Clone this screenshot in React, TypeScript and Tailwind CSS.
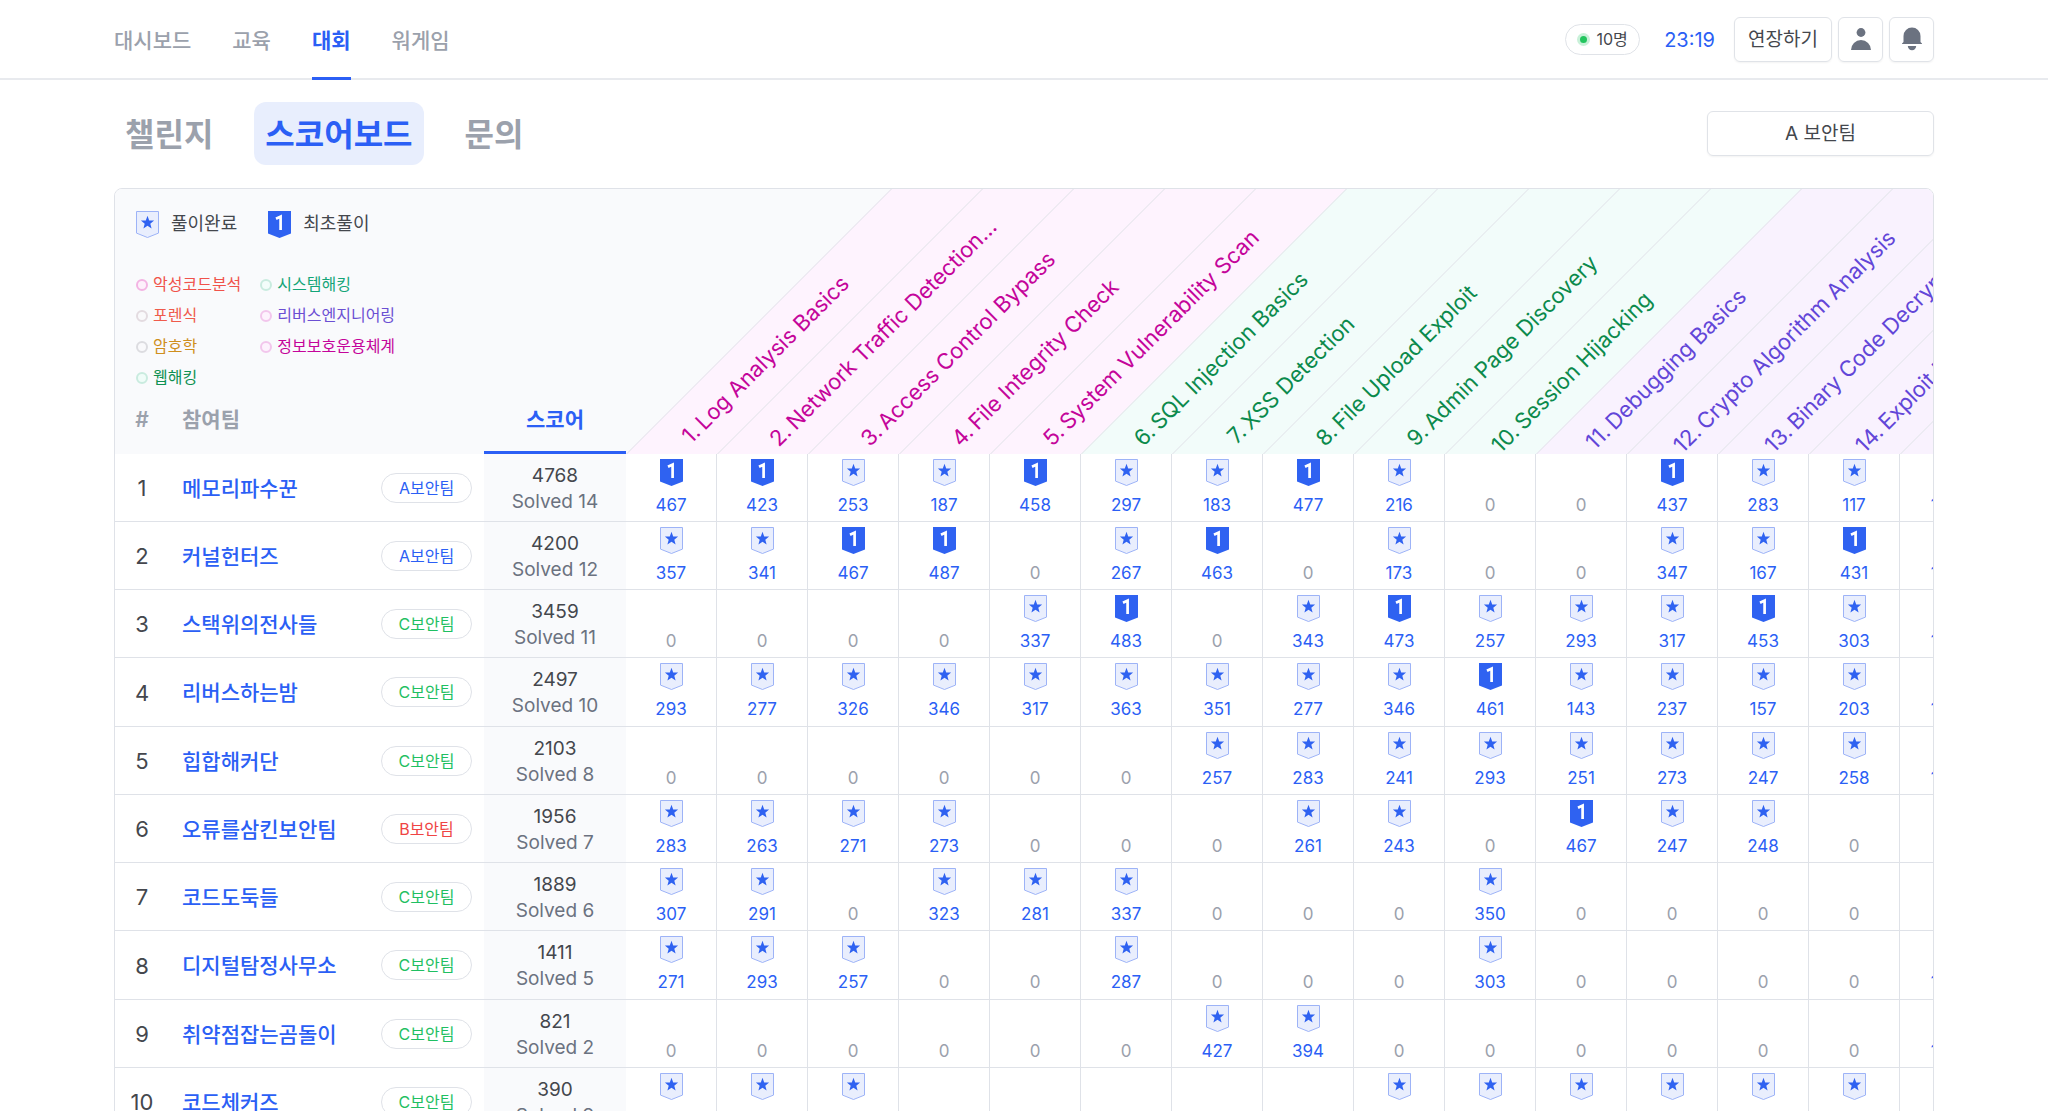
import clsx from "clsx";

type Category = "system" | "web" | "reversing";

const navItems = [
  { label: "대시보드", active: false },
  { label: "교육", active: false },
  { label: "대회", active: true },
  { label: "워게임", active: false },
];

const tabs = [
  { label: "챌린지", active: false },
  { label: "스코어보드", active: true },
  { label: "문의", active: false },
];

const legend = [
  { label: "악성코드분석", text: "text-[#f0524a]", ring: "border-[#f3b3e3] bg-[#fdf0fb]" },
  { label: "포렌식", text: "text-[#ef5b4c]", ring: "border-[#e3dbe0] bg-[#f9f9fb]" },
  { label: "암호학", text: "text-[#cf8f1d]", ring: "border-[#dcdce0] bg-[#f9f9fb]" },
  { label: "웹해킹", text: "text-[#0f9152]", ring: "border-[#c9ebdf] bg-[#effcf8]" },
  { label: "시스템해킹", text: "text-[#14a578]", ring: "border-[#c9ebdf] bg-[#f3fdfa]" },
  { label: "리버스엔지니어링", text: "text-[#6b4fd3]", ring: "border-[#f2c6ec] bg-[#fdf2fd]" },
  { label: "정보보호운용체계", text: "text-[#c4049a]", ring: "border-[#f2c6ec] bg-[#fdf2fd]" },
];

const challenges: { title: string; category: Category }[] = [
  { title: "Log Analysis Basics", category: "system" },
  { title: "Network Traffic Detection Rules", category: "system" },
  { title: "Access Control Bypass", category: "system" },
  { title: "File Integrity Check", category: "system" },
  { title: "System Vulnerability Scan", category: "system" },
  { title: "SQL Injection Basics", category: "web" },
  { title: "XSS Detection", category: "web" },
  { title: "File Upload Exploit", category: "web" },
  { title: "Admin Page Discovery", category: "web" },
  { title: "Session Hijacking", category: "web" },
  { title: "Debugging Basics", category: "reversing" },
  { title: "Crypto Algorithm Analysis", category: "reversing" },
  { title: "Binary Code Decryption", category: "reversing" },
  { title: "Exploit Development", category: "reversing" },
  { title: "Malware Unpacking", category: "reversing" },
];

const categoryBg: Record<Category, string> = {
  system: "bg-[#fef3fe]",
  web: "bg-[#f2fcfa]",
  reversing: "bg-[#f9f2fe]",
};

const categoryText: Record<Category, string> = {
  system: "text-[#c4049a]",
  web: "text-[#0b8a4c]",
  reversing: "text-[#6246d8]",
};

const orgText: Record<string, string> = {
  A: "text-[#2b5ff5]",
  B: "text-[#ef4444]",
  C: "text-[#1fbf62]",
};

// "*" marks a first blood
const teams = [
  { name: "메모리파수꾼", org: "A", score: 4768, solved: 14, cells: "467* 423* 253 187 458* 297 183 477* 216 0 0 437* 283 117 164" },
  { name: "커널헌터즈", org: "A", score: 4200, solved: 12, cells: "357 341 467* 487* 0 267 463* 0 173 0 0 347 167 431* 148" },
  { name: "스택위의전사들", org: "C", score: 3459, solved: 11, cells: "0 0 0 0 337 483* 0 343 473* 257 293 317 453* 303 164" },
  { name: "리버스하는밤", org: "C", score: 2497, solved: 10, cells: "293 277 326 346 317 363 351 277 346 461* 143 237 157 203 148" },
  { name: "힙합해커단", org: "C", score: 2103, solved: 8, cells: "0 0 0 0 0 0 257 283 241 293 251 273 247 258 146" },
  { name: "오류를삼킨보안팀", org: "B", score: 1956, solved: 7, cells: "283 263 271 273 0 0 0 261 243 0 467* 247 248 0 0" },
  { name: "코드도둑들", org: "C", score: 1889, solved: 6, cells: "307 291 0 323 281 337 0 0 0 350 0 0 0 0 0" },
  { name: "디지털탐정사무소", org: "C", score: 1411, solved: 5, cells: "271 293 257 0 0 287 0 0 0 303 0 0 0 0 164" },
  { name: "취약점잡는곰돌이", org: "C", score: 821, solved: 2, cells: "0 0 0 0 0 0 427 394 0 0 0 0 0 0 148" },
  { name: "코드체커즈", org: "C", score: 390, solved: 9, cells: "31 47 52 0 0 0 0 0 43 38 41 36 52 50 0" },
];

function SolvedBadge() {
  return (
    <svg width="23" height="27" viewBox="0 0 23 27" aria-hidden="true">
      <path d="M.5.5h22v21.600l-11 4.400-11-4.400z" fill="#e9eefd" stroke="#9db3f7" />
      <path
        d="M11.500 4.800l1.700 4.600 4.900.2-3.800 3.100 1.300 4.800-4.100-2.700-4.100 2.700 1.300-4.800-3.800-3.100 4.900-.2z"
        fill="#2f62f1"
      />
    </svg>
  );
}

function FirstBadge() {
  return (
    <svg width="23" height="27" viewBox="0 0 23 27" aria-hidden="true">
      <path d="M0 0h23v22.400L11.500 27 0 22.400z" fill="#2f62f1" />
      <path d="M8 7.800l4.600-2.200v13.400" fill="none" stroke="#fff" strokeWidth="2.700" />
    </svg>
  );
}

function TopNav() {
  return (
    <header className="border-b-2 border-[#e8eaee]">
      <div className="mx-auto flex h-[78px] w-full max-w-[1820px] items-center justify-between">
        <nav className="flex h-full gap-[41px]">
          {navItems.map((item) => (
            <a
              key={item.label}
              href="#"
              className={clsx(
                "-mb-[2px] flex h-[80px] items-center border-b-3 pt-1 text-[21px]",
                item.active
                  ? "border-[#2b5ff5] font-semibold text-[#2b5ff5]"
                  : "border-transparent font-medium text-[#9ba1ac]",
              )}
            >
              {item.label}
            </a>
          ))}
        </nav>
        <div className="flex items-center gap-1.5 text-[#44474d]">
          <div className="flex h-[31px] w-[75px] items-center justify-center gap-1.5 rounded-full border border-[#e0e3e8] text-base">
            <span className="size-[13px] rounded-full border-3 border-[#c9f1d9] bg-[#22c55e]" />
            10명
          </div>
          <span className="pt-0.5 pr-[13px] pl-[18px] text-[20px] text-[#2b5ff5]">23:19</span>
          <button className="h-[45px] w-[98px] rounded-md border border-[#e0e3e8] pt-0.5 text-[19px] shadow-xs">
            연장하기
          </button>
          <button
            aria-label="프로필"
            className="grid size-[45px] place-items-center rounded-md border border-[#e0e3e8] shadow-xs"
          >
            <svg width="22" height="24" viewBox="0 0 22 24" fill="#6b7280">
              <circle cx="11" cy="5.500" r="4.400" />
              <path d="M1 23a10 10 0 0 1 20 0z" />
            </svg>
          </button>
          <button
            aria-label="알림"
            className="grid size-[45px] place-items-center rounded-md border border-[#e0e3e8] shadow-xs"
          >
            <svg width="22" height="24" viewBox="0 0 22 24" fill="#6b7280">
              <path d="M2.500 15V9a8.500 8.500 0 0 1 17 0v6l1.500 1.400V17H1v-.6z" />
              <path d="M6.800 19h8.400a4.200 4.200 0 0 1-8.400 0z" />
            </svg>
          </button>
        </div>
      </div>
    </header>
  );
}

function Legend() {
  return (
    <div className="flex flex-col gap-[31px] px-[21px] text-[#44474d]">
      <div className="flex gap-[31px] text-[18px] leading-7">
        <span className="flex items-center gap-3">
          <SolvedBadge /> 풀이완료
        </span>
        <span className="flex items-center gap-3">
          <FirstBadge /> 최초풀이
        </span>
      </div>
      <ul className="grid w-fit grid-flow-col grid-rows-4 gap-x-[19px] text-base leading-[31px]">
        {legend.map((item) => (
          <li key={item.label} className={clsx("flex items-center gap-[5px]", item.text)}>
            <span className={clsx("size-3 rounded-full border-2", item.ring)} />
            {item.label}
          </li>
        ))}
      </ul>
    </div>
  );
}

function ChallengeHead({ index, title, category }: { index: number; title: string; category: Category }) {
  return (
    <th scope="col" className="relative p-0 align-bottom font-normal">
      <div
        className={clsx(
          "h-[265px] origin-bottom -skew-x-45 border-l border-[#dfe2e8]",
          categoryBg[category],
        )}
      />
      <div
        className={clsx(
          "absolute -bottom-2 left-14 flex origin-bottom-left -rotate-45 gap-1 text-[22px] leading-7",
          categoryText[category],
        )}
      >
        <span className="w-[34px] shrink-0 text-right">{index}.</span>
        <span className="w-[290px] truncate text-left">{title}</span>
      </div>
    </th>
  );
}

function ScoreCell({ value }: { value: string }) {
  const first = value.endsWith("*");
  const points = parseInt(value, 10);
  return (
    <td className="border-r border-b border-[#dfe2e8] p-0 align-top">
      <div className="flex h-[66px] flex-col items-center justify-between pt-[5px]">
        <span className="h-[27px]">{points > 0 && (first ? <FirstBadge /> : <SolvedBadge />)}</span>
        <span className={clsx("text-[17px] leading-[30px]", points > 0 ? "text-[#2b5ff5]" : "text-[#9ba1ac]")}>
          {points}
        </span>
      </div>
    </td>
  );
}

function Scoreboard() {
  return (
    <div className="overflow-hidden rounded-lg border border-[#dfe2e8]">
      <table className="w-[1876px] table-fixed border-separate border-spacing-0 text-center">
        <colgroup>
          <col className="w-[54px]" />
          <col className="w-[206px]" />
          <col className="w-[109px]" />
          <col className="w-[142px]" />
          {challenges.map((c) => (
            <col key={c.title} className="w-[91px]" />
          ))}
        </colgroup>
        <thead className="text-[21px]">
          <tr className="bg-[#f9fafc]">
            <th colSpan={4} className="p-0 text-left align-top font-normal">
              <div className="flex h-[265px] flex-col justify-between pt-[21px]">
                <Legend />
                <div className="flex font-semibold text-[#9ba1ac]">
                  <span className="w-[54px] text-center">#</span>
                  <span className="w-[315px] pl-[13px]">참여팀</span>
                  <span className="h-[50px] w-[142px] border-b-3 border-[#2b5ff5] text-center text-[#2b5ff5]">
                    스코어
                  </span>
                </div>
              </div>
            </th>
            {challenges.map((c, i) => (
              <ChallengeHead key={c.title} index={i + 1} {...c} />
            ))}
          </tr>
        </thead>
        <tbody>
          {teams.map((team, i) => (
            <tr key={team.name} className="h-[68px] nth-[4n]:h-[69px]">
              <td className="border-b border-[#dfe2e8] p-0 pt-0.5 text-[22px] text-[#44474d]">{i + 1}</td>
              <td className="border-b border-[#dfe2e8] p-0 pt-0.5 pl-[13px] text-left text-[21px] font-medium">
                <a href="#" className="text-[#2b5ff5]">
                  {team.name}
                </a>
              </td>
              <td className="border-b border-[#dfe2e8] p-0 pr-3">
                <span
                  className={clsx(
                    "ml-auto flex h-[30px] w-[91px] items-center justify-center rounded-full border border-[#dfe2e8] text-base",
                    orgText[team.org],
                  )}
                >
                  {team.org}보안팀
                </span>
              </td>
              <td className="border-b border-[#dfe2e8] bg-[#f9fafc] p-0 pt-0.5 text-[19px] leading-[26px] text-[#44474d]">
                {team.score}
                <div className="text-[#6b7280]">Solved {team.solved}</div>
              </td>
              {team.cells.split(" ").map((value, j) => (
                <ScoreCell key={j} value={value} />
              ))}
            </tr>
          ))}
        </tbody>
      </table>
    </div>
  );
}

export default function App() {
  return (
    <div className="h-screen overflow-hidden bg-white font-['Inter','Noto_Sans_CJK_KR',sans-serif]">
      <TopNav />
      <main className="mx-auto w-full max-w-[1820px]">
        <div className="flex items-center justify-between pt-[22px] pb-[23px]">
          <div className="flex gap-[30px]">
            {tabs.map((tab) => (
              <button
                key={tab.label}
                className={clsx(
                  "h-[63px] rounded-xl px-[11px] pt-0.5 text-[32px] font-bold",
                  tab.active ? "bg-[#e8eefd] text-[#2b5ff5]" : "text-[#9ba1ac]",
                )}
              >
                {tab.label}
              </button>
            ))}
          </div>
          <button className="h-[45px] w-[227px] rounded-md border border-[#e0e3e8] pt-0.5 text-[19px] text-[#44474d] shadow-xs">
            A 보안팀
          </button>
        </div>
        <Scoreboard />
      </main>
    </div>
  );
}
